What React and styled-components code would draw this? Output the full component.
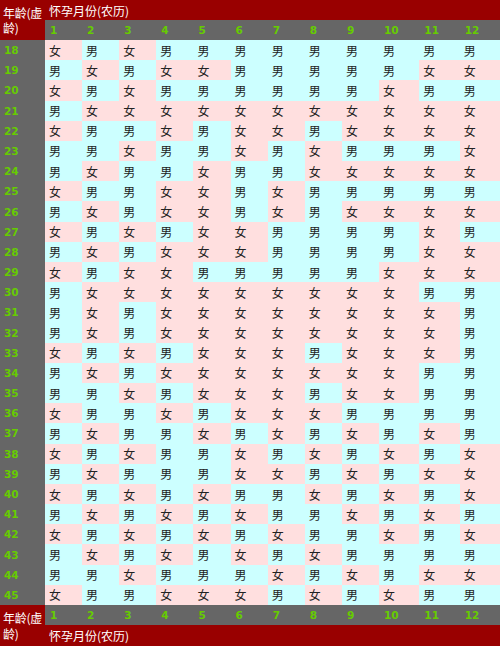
import React from "react";
import styled, { createGlobalStyle } from "styled-components";

const GlobalStyle = createGlobalStyle`
  html, body { margin: 0; padding: 0; background: #ffffff; }
  body { font-family: "Noto Sans CJK SC", "Noto Sans", sans-serif; }
`;

const ROWS = [
  [18, "FMFMMMMMMMMM"],
  [19, "MFMFFMMMMMFF"],
  [20, "FMFMMMMMMFMM"],
  [21, "MFFFFFFFFFFF"],
  [22, "FMMFMFFMFFFF"],
  [23, "MMFMMFMFMMMF"],
  [24, "MFMMFMMFFFFF"],
  [25, "FMMFFMFMMMMM"],
  [26, "MFMFFMFMFFFF"],
  [27, "FMFMFFMMMMFM"],
  [28, "MFMFFFMMMMFF"],
  [29, "FMFFMMMMMFFF"],
  [30, "MFFFFFFFFFMM"],
  [31, "MFMFFFFFFFFM"],
  [32, "MFMFFFFFFFFM"],
  [33, "FMFMFFFMFFFM"],
  [34, "MFMFFFFFFFMM"],
  [35, "MMFMFFFMFFMM"],
  [36, "FMMFMFFFMMMM"],
  [37, "MFMMFMFMFMFM"],
  [38, "FMFMMFMFMFMF"],
  [39, "MFMMMFFMFMFF"],
  [40, "FMFMFMMFMFMF"],
  [41, "MFMFMFMMFMFM"],
  [42, "FMFMFMFMMFMF"],
  [43, "MFMFMFMFMMMM"],
  [44, "MMFMMMFMFMFF"],
  [45, "FMMFFFMFMFMM"],
];

const MONTHS = Array.from({ length: 12 }, (_, i) => i + 1);

const Chart = styled.div`
  width: 500px;
  height: 646px;
  display: grid;
  grid-template-columns: 45px repeat(9, 37.1fr) repeat(3, 40.3fr);
  grid-template-rows: 20px 20px repeat(28, 1fr) 20px 21px;
  font-size: 12px;
`;

const CornerCell = styled.div`
  grid-row: span 2;
  background: #990000;
  color: #ffffff;
  padding: 0 0 0 3px;
  display: flex;
  align-items: center;
  white-space: nowrap;
  letter-spacing: -0.3px;
  line-height: ${(p) => p.$lh}px;
  font-family: "Noto Sans CJK SC", sans-serif;
`;

const TitleCell = styled.div`
  grid-column: span 12;
  background: #990000;
  color: #ffffff;
  padding-left: 4px;
  display: flex;
  align-items: center;
  font-family: "Noto Sans CJK SC", sans-serif;
`;

const NumberCell = styled.div`
  background: #666666;
  color: #66cc00;
  font-family: "DejaVu Sans", Verdana, sans-serif;
  font-weight: bold;
  font-size: 10.5px;
  padding-left: ${(p) => p.$pad}px;
  display: flex;
  align-items: center;
`;

const GenderCell = styled.div`
  background: ${(p) => (p.$boy ? "#ccffff" : "#ffdfdf")};
  color: #222222;
  padding-left: 4px;
  display: flex;
  align-items: center;
  font-family: "Noto Sans CJK SC", sans-serif;
`;

const AgeLabel = () => (
  <>
    年龄(虚
    <br />
    龄)
  </>
);

export default function App() {
  return (
    <>
      <GlobalStyle />
      <Chart>
        <CornerCell $lh={15}>
          <span>
            <AgeLabel />
          </span>
        </CornerCell>
        <TitleCell>怀孕月份(农历)</TitleCell>
        {MONTHS.map((m) => (
          <NumberCell key={`h${m}`} $pad={5}>
            {m}
          </NumberCell>
        ))}
        {ROWS.map(([age, pattern]) => (
          <React.Fragment key={age}>
            <NumberCell $pad={4}>{age}</NumberCell>
            {pattern.split("").map((g, i) => (
              <GenderCell key={i} $boy={g === "M"}>
                {g === "M" ? "男" : "女"}
              </GenderCell>
            ))}
          </React.Fragment>
        ))}
        <CornerCell $lh={16}>
          <span>
            <AgeLabel />
          </span>
        </CornerCell>
        {MONTHS.map((m) => (
          <NumberCell key={`f${m}`} $pad={5}>
            {m}
          </NumberCell>
        ))}
        <TitleCell>怀孕月份(农历)</TitleCell>
      </Chart>
    </>
  );
}
